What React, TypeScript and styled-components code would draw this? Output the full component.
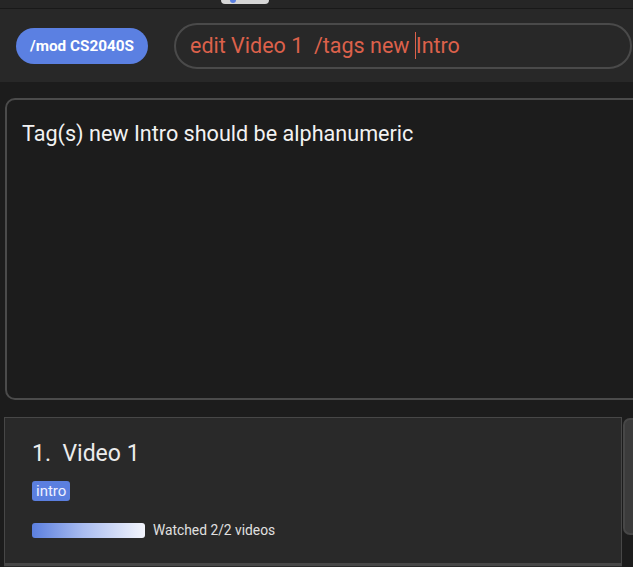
import React from "react";
import styled, { createGlobalStyle } from "styled-components";

const Global = createGlobalStyle`
  html, body { margin: 0; padding: 0; background: #1c1c1c; overflow: hidden; }
  body { font-family: Roboto, "Liberation Sans", sans-serif; }
`;

const Page = styled.div`
  width: 633px;
  height: 567px;
  overflow: hidden;
  background: #1c1c1c;
  display: flex;
  flex-direction: column;
`;

const TopStrip = styled.div`
  height: 8px;
  background: #262626;
  border-bottom: 1px solid #191919;
  display: flex;
  flex-shrink: 0;
`;

const Handle = styled.div`
  margin-left: 221px;
  width: 48px;
  height: 4px;
  background: #d6d6d6;
  border-radius: 0 0 5px 5px;
  display: flex;
  justify-content: flex-start;
  padding-left: 9px;
  box-sizing: border-box;
`;

const HandleDot = styled.div`
  width: 6px;
  height: 3px;
  background: #5a7fe0;
  border-radius: 0 0 3px 3px;
`;

const Header = styled.header`
  height: 73px;
  background: #282828;
  display: flex;
  align-items: center;
  padding-left: 16px;
  flex-shrink: 0;
`;

const ModButton = styled.button`
  width: 132px;
  height: 36px;
  border: none;
  border-radius: 18px;
  background: #5b80e2;
  color: #ffffff;
  font-family: Roboto, "Liberation Sans", sans-serif;
  font-weight: 700;
  font-size: 15.3px;
  padding: 0;
  flex-shrink: 0;
`;

const CommandBox = styled.div`
  margin-left: 26px;
  width: 458px;
  height: 46px;
  box-sizing: border-box;
  border: 2px solid #4a4a4a;
  border-radius: 23px;
  display: flex;
  align-items: center;
  padding-left: 14px;
  color: #dc614b;
  font-size: 21.5px;
  white-space: pre;
  flex-shrink: 0;
`;

const Caret = styled.span`
  display: inline-block;
  width: 1px;
  height: 27px;
  background: #dc614b;
`;

const Main = styled.main`
  display: flex;
  flex-direction: column;
  padding: 16px 0 0 4px;
  gap: 17px;
`;

const ResultBox = styled.div`
  margin-left: 1px;
  width: 650px;
  height: 302px;
  box-sizing: border-box;
  border: 2px solid #4b4b4b;
  border-radius: 10px;
  background: #1c1c1c;
  padding: 22px 15px;
  color: #f2f2f2;
  font-size: 21.6px;
  line-height: 24px;
  flex-shrink: 0;
`;

const ListRow = styled.div`
  display: flex;
  gap: 1px;
  align-items: flex-start;
`;

const ListColumn = styled.div`
  display: flex;
  flex-direction: column;
`;

const Card = styled.div`
  width: 618px;
  height: 147px;
  box-sizing: border-box;
  background: #292929;
  border: 1px solid #474747;
  padding: 23px 27px;
  display: flex;
  flex-direction: column;
  align-items: flex-start;
`;

const Title = styled.div`
  color: #ececec;
  font-size: 23px;
  white-space: pre;
  line-height: 26px;
`;

const Tag = styled.span`
  margin-top: 14px;
  background: #5b7fdf;
  color: #eef0ff;
  font-size: 15px;
  line-height: 20px;
  padding: 0 4px;
  border-radius: 3px;
`;

const ProgressRow = styled.div`
  margin-top: 22px;
  display: flex;
  align-items: center;
  gap: 8px;
`;

const Bar = styled.div`
  width: 113px;
  height: 15px;
  border-radius: 3px;
  background: linear-gradient(90deg, #5b7fdf 0%, #a9bcf0 45%, #f3f5fc 100%);
`;

const ProgressText = styled.span`
  color: #e0e0e0;
  font-size: 13.8px;
  line-height: 15px;
`;

const NextCardEdge = styled.div`
  width: 618px;
  height: 4px;
  background: #292929;
  border-top: 2px solid #474747;
  box-sizing: border-box;
`;

const ScrollTrack = styled.div`
  width: 12px;
  height: 150px;
  display: flex;
  flex-direction: column;
  padding-top: 1px;
`;

const ScrollThumb = styled.div`
  width: 12px;
  height: 117px;
  border-radius: 7px 0 0 7px;
  background: #3b3b3b;
  border: 2px solid #474747;
  border-right: none;
  box-sizing: border-box;
`;

export default function App() {
  return (
    <>
      <Global />
      <Page>
        <TopStrip>
          <Handle>
            <HandleDot />
          </Handle>
        </TopStrip>
        <Header>
          <ModButton>/mod CS2040S</ModButton>
          <CommandBox>
            <span>edit Video 1  /tags new </span>
            <Caret />
            <span>Intro</span>
          </CommandBox>
        </Header>
        <Main>
          <ResultBox>Tag(s) new Intro should be alphanumeric</ResultBox>
          <ListRow>
            <ListColumn>
              <Card>
                <Title>{"1.  Video 1"}</Title>
                <Tag>intro</Tag>
                <ProgressRow>
                  <Bar />
                  <ProgressText>Watched 2/2 videos</ProgressText>
                </ProgressRow>
              </Card>
              <NextCardEdge />
            </ListColumn>
            <ScrollTrack>
              <ScrollThumb />
            </ScrollTrack>
          </ListRow>
        </Main>
      </Page>
    </>
  );
}
